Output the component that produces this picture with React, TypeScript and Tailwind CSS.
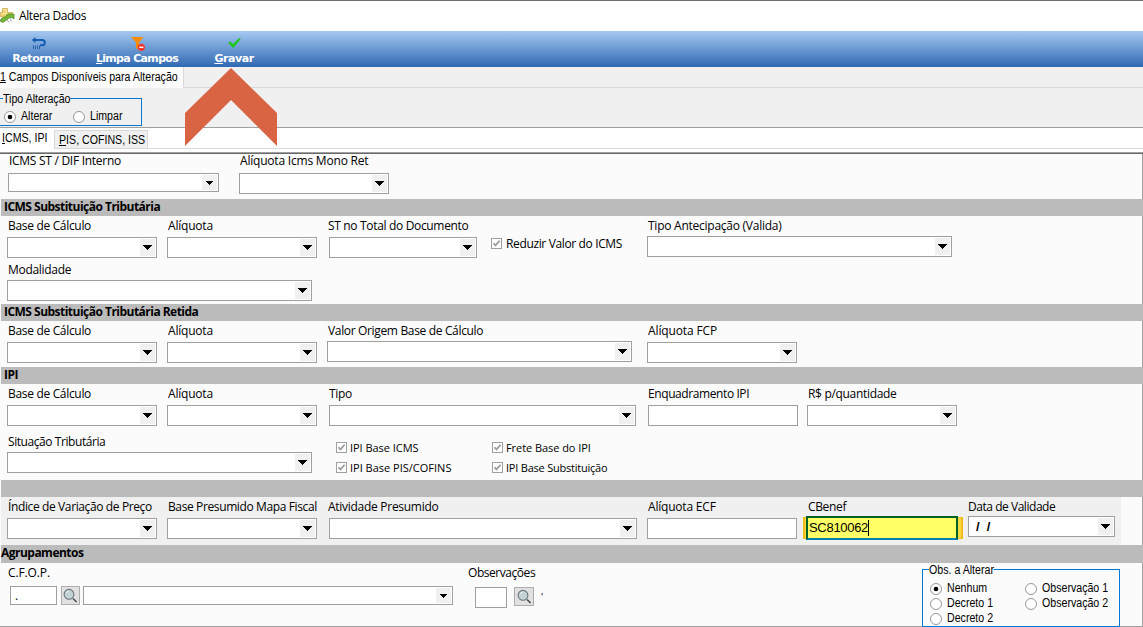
import React from "react";

const labelFont = "font-['Open_Sans','Noto_Sans',sans-serif]";
const bitmapFont = "font-['Liberation_Sans',Arial,sans-serif] block w-max origin-left scale-x-[0.885] whitespace-nowrap text-[12px]";
const editFont = "font-['Liberation_Sans',Arial,sans-serif]";

function Arrow({ small = false }: { small?: boolean }) {
  return small ? (
    <svg className="block h-1 w-[7px]" viewBox="0 0 7 4" shapeRendering="crispEdges">
      <path d="M0 0h7v1H0zM1 1h5v1H1zM2 2h3v1H2zM3 3h1v1H3z" />
    </svg>
  ) : (
    <svg className="block h-[5px] w-[9px]" viewBox="0 0 9 5" shapeRendering="crispEdges">
      <path d="M0 0h9v1H0zM1 1h7v1H1zM2 2h5v1H2zM3 3h3v1H3zM4 4h1v1H4z" />
    </svg>
  );
}

function Combo({ className, small, children }: { className: string; small?: boolean; children?: React.ReactNode }) {
  return (
    <div className={`flex shrink-0 items-stretch justify-end border border-[#a0a0a0] bg-white p-px ${small ? "h-[19px]" : "h-[21px]"} ${className}`}>
      {children}
      <span className="flex w-[15px] items-center justify-center bg-[#f0f0f0]">
        <Arrow small={small} />
      </span>
    </div>
  );
}

function Input({ className, children }: { className: string; children?: React.ReactNode }) {
  return <div className={`shrink-0 border border-[#a0a0a0] bg-white ${className}`}>{children}</div>;
}

function Label({ className = "tracking-[-0.32px]", children }: { className?: string; children: React.ReactNode }) {
  return (
    <span className={`block h-[14px] whitespace-nowrap pl-px text-[12px] leading-[14px] text-black ${labelFont} ${className}`}>
      {children}
    </span>
  );
}

function Field({ label, className = "", labelClass, children }: { label: string; className?: string; labelClass?: string; children: React.ReactNode }) {
  return (
    <div className={`flex shrink-0 flex-col gap-1 ${className}`}>
      <Label className={labelClass}>{label}</Label>
      {children}
    </div>
  );
}

function Check({ label, className = "", textClass = "text-[11px]" }: { label: string; className?: string; textClass?: string }) {
  return (
    <div className={`flex h-[11px] shrink-0 items-center gap-[3px] ${className}`}>
      <svg className="block h-[11px] w-[11px]" viewBox="0 0 11 11">
        <rect x=".5" y=".5" width="10" height="10" fill="#fff" stroke="#a0a0a0" />
        <path d="M2.5 5.2 4.5 7.4 8.6 2.8" fill="none" stroke="#9a9a9a" strokeWidth="1.7" />
      </svg>
      <span className={`whitespace-nowrap leading-[14px] text-black ${labelFont} ${textClass}`}>{label}</span>
    </div>
  );
}

function Section({ title = "", className = "h-[17px] pl-[3px]" }: { title?: string; className?: string }) {
  return (
    <div className={`ml-px shrink-0 whitespace-nowrap bg-[#bbbbbb] text-[12px] font-bold leading-[16px] tracking-[-0.52px] text-black ${labelFont} ${className}`}>
      {title}
    </div>
  );
}

function Radio({ label, checked = false, className = "" }: { label: string; checked?: boolean; className?: string }) {
  return (
    <div className={`flex items-center gap-[5px] ${className}`}>
      <svg className="block h-3 w-3 shrink-0" viewBox="0 0 12 12">
        <circle cx="6" cy="6" r="5.5" fill="#fff" stroke="#8c8c8c" strokeWidth=".9" />
        {checked && <circle cx="6" cy="6" r="2.3" fill="#000" />}
      </svg>
      <span className={`leading-[15px] ${bitmapFont}`}>{label}</span>
    </div>
  );
}

function SearchButton({ className }: { className: string }) {
  return (
    <div className={`flex h-[19px] shrink-0 items-center justify-center border border-[#adadad] bg-[#e1e1e1] ${className}`}>
      <svg className="block h-[15px] w-[15px]" viewBox="0 0 15 15">
        <circle cx="6" cy="6.3" r="4.9" fill="#c3d3d6" stroke="#69757a" strokeWidth="1.1" />
        <path d="M3.6 4.4 5.6 3" stroke="#fff" strokeWidth="1" />
        <path d="m10 10.4 3.6 3.6" stroke="#444" strokeWidth="1.4" />
      </svg>
    </div>
  );
}

function Tool({ first, rest, className, textClass, children }: { first: string; rest: string; className: string; textClass: string; children: React.ReactNode }) {
  return (
    <div className={`flex shrink-0 flex-col items-center ${className}`}>
      {children}
      <span className={`whitespace-nowrap font-['DejaVu_Sans',Verdana,sans-serif] text-[11px] font-bold leading-[15px] text-white ${textClass}`}>
        {first === "R" ? first : <u className="underline-offset-1">{first}</u>}
        {rest}
      </span>
    </div>
  );
}

export default function App() {
  return (
    <div className="relative flex h-[627px] w-[1143px] flex-col overflow-hidden bg-[#f0f0f0] text-black">
      <header className="flex h-[31px] shrink-0 items-center gap-1 border-t border-[#6b6b70] bg-white">
        <svg className="mb-px block h-4 w-[15px]" viewBox="0 0 15 16">
          <path d="M2.5.5h5v4h5v4h-5v3h-5v-3H0v-4h2.5z" fill="#edcf6e" stroke="#c9a548" strokeWidth=".7" />
          <path d="M3.5 1.7h2.8v4H1" fill="none" stroke="#f9ebb0" />
          <path d="m0 13 1-2 5-3 2-2h6v5l-2-1.5-3 .5-6 4.5z" fill="#74b532" stroke="#4b8826" strokeWidth=".7" />
          <path d="m7 11.5 2 3m1-4 1.5 3" stroke="#9aa4aa" />
        </svg>
        <span className={`text-[12px] leading-4 tracking-[-0.42px] ${labelFont}`}>Altera Dados</span>
      </header>

      <nav className="flex h-9 shrink-0 bg-linear-to-b from-[#a6c9f1] to-[#2f69b3] pt-[5px]">
        <Tool first="R" rest="etornar" className="ml-3 w-[52px]" textClass="tracking-[-0.4px]">
          <svg className="block h-[15px] w-4" viewBox="0 0 16 15">
            <path d="M4 4h8.2a2.4 2.4 0 0 1 0 5.2H10" fill="none" stroke="#155cb0" strokeWidth="2" />
            <path d="m1.8 4 3.7-3v6z" fill="#155cb0" />
            <path d="M3.5 9.5V13M5.5 9.5V13M7.5 9.5V13M9.5 9.5V13" stroke="#2463a7" />
          </svg>
        </Tool>
        <Tool first="L" rest="impa Campos" className="ml-[31px] w-[84px]" textClass="tracking-[-0.68px]">
          <svg className="block h-[15px] w-4" viewBox="0 0 16 15">
            <path d="M2 1h12.5L10 6.5V14l-3-2V6.5z" fill="#f78b0c" />
            <circle cx="12.3" cy="11.3" r="3.6" fill="#ee3933" />
            <path d="M10.2 11.3h4.2" stroke="#fff" strokeWidth="1.4" />
          </svg>
        </Tool>
        <Tool first="G" rest="ravar" className="ml-[35px] w-10" textClass="tracking-[-0.45px]">
          <svg className="block h-[15px] w-[15px]" viewBox="0 0 15 15">
            <path d="m1 7 2.2-1.6L6 8l6.2-6 1.5 1-7.3 9z" fill="#20c51c" />
          </svg>
        </Tool>
      </nav>

      <div className="flex h-[21px] shrink-0 items-stretch">
        <div className="w-[184px] border-r border-[#d9d9d9] bg-[#fbfbfb]">
          <span className={`leading-[20px] ${bitmapFont}`}><u>1</u> Campos Disponíveis para Alteração</span>
        </div>
        <div className="grow border-b border-[#d9d9d9]" />
      </div>

      <div className="h-10 shrink-0 border-b border-[#a0a0a0] pt-[10px]">
        <div className="relative h-7 w-[142px] border border-l-0 border-[#0078d7]">
          <span className={`absolute -top-[7px] left-[3px] bg-[#f0f0f0] leading-[14px] ${bitmapFont}`}>Tipo Alteração</span>
          <div className="flex pt-[10px] pl-1">
            <Radio label="Alterar" checked className="w-[69px]" />
            <Radio label="Limpar" />
          </div>
        </div>
      </div>

      <div className="flex h-[21px] shrink-0 bg-white">
        <div className="w-[54px] pl-[2px]">
          <span className={`leading-[20px] ${bitmapFont}`}><u>I</u>CMS, IPI</span>
        </div>
        <div className="mt-[2px] w-[94px] border border-[#d9d9d9] bg-[#f0f0f0] pl-1">
          <span className={`leading-[18px] ${bitmapFont}`}><u>P</u>IS, COFINS, ISS</span>
        </div>
        <div className="grow border-b border-[#d9d9d9]" />
      </div>

      <div className="h-[5px] shrink-0 bg-white pt-[3px]">
        <div className="h-[2px] border-t border-b border-t-[#a0a0a0] border-b-[#696969]" />
      </div>

      <main className="flex h-[473px] shrink-0 flex-col border-b border-[#a0a0a0] bg-[#fbfbfb]">
        <div className="flex h-[45px] shrink-0 border-r border-[#a0a0a0] pl-2">
          <Field label="ICMS ST / DIF Interno" className="gap-[5px]" labelClass="tracking-[-0.28px]"><Combo small className="w-[211px]" /></Field>
          <Field label="Alíquota Icms Mono Ret" className="ml-5 gap-[5px]" labelClass="tracking-[-0.2px]"><Combo className="w-[150px]" /></Field>
        </div>

        <Section title="ICMS Substituição Tributária" />
        <div className="flex h-[88px] shrink-0 flex-col border-r border-[#a0a0a0] pt-[3px] pl-[7px]">
          <div className="flex h-11">
            <Field label="Base de Cálculo"><Combo className="w-[150px]" /></Field>
            <Field label="Alíquota" className="ml-[10px]" labelClass="tracking-[-0.2px]"><Combo className="w-[150px]" /></Field>
            <Field label="ST no Total do Documento" className="ml-3" labelClass="-ml-[2px] tracking-[-0.33px]"><Combo className="w-[148px]" /></Field>
            <Check label="Reduzir Valor do ICMS" className="mt-[19px] ml-[14px] w-[156px]" textClass="pl-px text-[12px] tracking-[-0.36px]" />
            <Field label="Tipo Antecipação (Valida)" className="gap-[3px]" labelClass="tracking-[-0.25px]"><Combo className="w-[305px]" /></Field>
          </div>
          <Field label="Modalidade" className="gap-[3px]" labelClass="tracking-[-0.3px]"><Combo className="w-[305px]" /></Field>
        </div>

        <Section title="ICMS Substituição Tributária Retida" />
        <div className="flex h-[46px] shrink-0 border-r border-[#a0a0a0] pt-[3px] pl-[7px]">
          <Field label="Base de Cálculo"><Combo className="w-[150px]" /></Field>
          <Field label="Alíquota" className="ml-[10px]" labelClass="tracking-[-0.2px]"><Combo className="w-[150px]" /></Field>
          <Field label="Valor Origem Base de Cálculo" className="ml-[10px] gap-[3px]" labelClass="tracking-[-0.34px]"><Combo className="w-[305px]" /></Field>
          <Field label="Alíquota FCP" className="ml-[15px]" labelClass="tracking-[-0.12px]"><Combo className="w-[150px]" /></Field>
        </div>

        <Section title="IPI" />
        <div className="flex h-[96px] shrink-0 flex-col border-r border-[#a0a0a0] pt-[3px] pl-[7px]">
          <div className="flex h-12">
            <Field label="Base de Cálculo"><Combo className="w-[150px]" /></Field>
            <Field label="Alíquota" className="ml-[10px]" labelClass="tracking-[-0.2px]"><Combo className="w-[150px]" /></Field>
            <Field label="Tipo" className="ml-3" labelClass="-ml-px tracking-[-0.3px]"><Combo className="w-[307px]" /></Field>
            <Field label="Enquadramento IPI" className="ml-3" labelClass="-ml-px tracking-[-0.41px]"><Input className="h-[21px] w-[150px]" /></Field>
            <Field label="R$ p/quantidade" className="ml-[9px]"><Combo className="w-[150px]" /></Field>
          </div>
          <div className="flex">
            <Field label="Situação Tributária" className="gap-[3px]" labelClass="tracking-[-0.43px]"><Combo className="w-[305px]" /></Field>
            <div className="mt-[7px] ml-6 grid grid-cols-[156px_auto] content-start gap-y-[9px]">
              <Check label="IPI Base ICMS" textClass="text-[11px] tracking-[-0.04px]" />
              <Check label="Frete Base do IPI" textClass="text-[11px] tracking-[-0.06px]" />
              <Check label="IPI Base PIS/COFINS" textClass="text-[11px] tracking-[0px]" />
              <Check label="IPI Base Substituição" textClass="text-[11px] tracking-[-0.22px]" />
            </div>
          </div>
        </div>

        <Section />
        <div className="flex h-12 shrink-0 border-r border-[#a0a0a0]">
          <div className="ml-px flex h-12 w-[1120px] bg-[#f0f0f0] pt-[3px] pl-[6px]">
            <Field label="Índice de Variação de Preço" className="w-[150px]" labelClass="tracking-[-0.38px]"><Combo className="w-[150px]" /></Field>
            <Field label="Base Presumido Mapa Fiscal" className="ml-[10px] w-[150px]" labelClass="tracking-[-0.38px]"><Combo className="w-[150px]" /></Field>
            <Field label="Atividade Presumido" className="ml-3" labelClass="-ml-[2px] tracking-[-0.28px]"><Combo className="w-[308px]" /></Field>
            <Field label="Alíquota ECF" className="ml-[10px]" labelClass="tracking-[-0.2px]"><Input className="h-[21px] w-[150px]" /></Field>
            <Field label="CBenef" className="ml-[6px] gap-[3px]" labelClass="ml-1 tracking-[-0.35px]">
              <div className="h-[22px] w-40 border-x-2 border-y border-[#f2bd1c] bg-[#f4d943] pr-[3px] pl-px">
                <div className="-mt-[2px] h-6 border-2 border-[#006128] border-b-[#007fb0] bg-[#ffff66]">
                  <span className={`flex h-5 items-center pl-px text-[13px] tracking-[-0.3px] ${editFont}`}>
                    SC810062
                    <i className="h-4 w-px bg-black" />
                  </span>
                </div>
              </div>
            </Field>
            <Field label="Data de Validade" className="ml-[5px] gap-[2px]" labelClass="-ml-px tracking-[-0.46px]">
              <Combo className="w-[147px]">
                <span className={`grow pl-1.5 text-[13px] font-bold leading-[17px] whitespace-pre ${editFont}`}>/  /</span>
              </Combo>
            </Field>
          </div>
        </div>

        <Section title="Agrupamentos" className="h-[18px]" />
        <div className="flex h-[63px] shrink-0 border-r border-[#a0a0a0] pt-[3px]">
          <Field label="C.F.O.P." className="ml-2 gap-[6px]" labelClass="-ml-px tracking-[-0.12px]">
            <div className="flex pl-[2px]">
              <Input className="h-[19px] w-[47px] pl-1"><span className={`block text-[12px] leading-[17px] ${labelFont}`}>.</span></Input>
              <SearchButton className="ml-1 w-[19px]" />
              <Combo small className="ml-[3px] w-[370px]" />
            </div>
          </Field>
          <Field label="Observações" className="ml-[14px] gap-[7px]" labelClass="tracking-[-0.45px]">
            <div className="flex items-start pl-2">
              <Input className="h-[21px] w-8" />
              <SearchButton className="ml-[7px] w-5" />
              <span className={`ml-[7px] text-[11px] leading-[20px] text-[#26265a] ${editFont}`}>'</span>
            </div>
          </Field>
          <div className="relative mt-[3px] ml-auto mr-[22px] h-[58px] w-[198px] border border-[#0078d7]">
            <span className={`absolute -top-[7px] left-[6px] bg-[#fbfbfb] leading-[14px] ${bitmapFont}`}>Obs. a Alterar</span>
            <div className="grid grid-flow-col grid-cols-[95px_auto] grid-rows-[15px_15px_15px] pt-[11px] pl-[7px]">
              <Radio label="Nenhum" checked />
              <Radio label="Decreto 1" />
              <Radio label="Decreto 2" />
              <Radio label="Observação 1" />
              <Radio label="Observação 2" />
            </div>
          </div>
        </div>
      </main>

      <svg className="absolute top-[68px] left-[185px] h-[78px] w-[92px]" viewBox="0 0 92 78">
        <path d="M46 0 92 45v33L46 32 0 78V45z" fill="#d96444" />
      </svg>
    </div>
  );
}
